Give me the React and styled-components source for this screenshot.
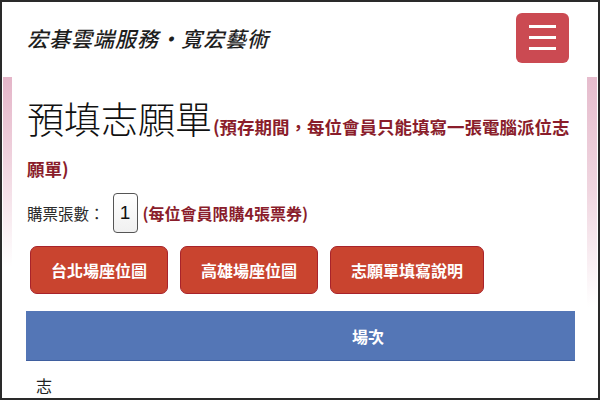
import React from "react";
import styled, { createGlobalStyle } from "styled-components";

const Global = createGlobalStyle`
  html, body { margin: 0; padding: 0; background: #fff; }
  body { font-family: "Noto Sans CJK TC", "Noto Sans", sans-serif; }
`;

const Frame = styled.div`
  width: 600px;
  height: 400px;
  box-sizing: border-box;
  border: 2px solid #2a2a2a;
  overflow: hidden;
  background:
    linear-gradient(to bottom, #e4b5c8 0%, #efd0dc 40%, #fff 100%) 1px 75px / 9px 190px no-repeat,
    linear-gradient(to bottom, #e6bccd 0%, #f0d6e0 50%, #fff 100%) 585px 75px / 10px 230px no-repeat,
    #fff;
`;

const Header = styled.header`
  display: flex;
  justify-content: space-between;
  align-items: center;
  padding: 11px 29px 0 25px;
  height: 49px;
`;

const Brand = styled.div`
  font-size: 21px;
  font-style: italic;
  font-weight: 500;
  color: #1e1e1e;
  letter-spacing: 1px;
`;

const MenuButton = styled.button`
  width: 53px;
  height: 50px;
  box-sizing: border-box;
  border: none;
  border-radius: 6px;
  background: #cb4a52;
  display: flex;
  flex-direction: column;
  justify-content: center;
  align-items: center;
  gap: 8px;
  padding: 0;
`;

const Bar = styled.span`
  display: block;
  width: 27px;
  height: 3px;
  background: #fff;
`;

const Content = styled.main`
  padding: 35px 0 0 25px;
`;

const Title = styled.h1`
  margin: 0;
  font-size: 37px;
  line-height: 42px;
  font-weight: 300;
  color: #111;
  padding-right: 28px;
`;

const Note = styled.span`
  font-size: 17.5px;
  line-height: 1;
  font-weight: 700;
  color: #8a1d2b;
  margin-left: 1px;
`;

const QtyNote = styled(Note)`
  font-size: 16px;
  margin-left: 0;
`;

const QtyRow = styled.div`
  display: flex;
  align-items: center;
  margin-top: 12px;
  font-size: 15.5px;
  color: #2a2a2a;
`;

const QtyBox = styled.div`
  width: 25px;
  height: 40px;
  box-sizing: border-box;
  border: 1px solid #555;
  border-radius: 4px;
  background: linear-gradient(#fff, #f0f0f0);
  display: flex;
  align-items: center;
  justify-content: center;
  font-family: "Liberation Sans", sans-serif;
  font-size: 19px;
  color: #111;
  margin: 0 5px 0 8px;
`;

const Buttons = styled.div`
  display: flex;
  gap: 12px;
  margin-top: 13px;
  padding-left: 3px;
`;

const RedButton = styled.button`
  height: 48px;
  padding: 0 20px;
  border: 1px solid #a8232b;
  border-radius: 7px;
  background: #c9442f;
  color: #fff;
  font-family: "Noto Sans CJK TC", sans-serif;
  font-size: 16px;
  font-weight: 700;
`;

const TableHead = styled.div`
  display: grid;
  grid-template-columns: 135px 1fr;
  width: 549px;
  height: 50px;
  margin: 17px 0 0 -1px;
  background: #5476b6;
  border-bottom: 1px solid #3f5f9f;
  box-sizing: border-box;
  color: #fff;
  font-size: 16px;
  font-weight: 700;
  align-items: center;
`;

const HeadCell = styled.div`
  text-align: center;
`;

const RowText = styled.div`
  margin: 12px 0 0 9px;
  font-size: 16px;
  color: #222;
`;

export default function App() {
  return (
    <>
      <Global />
      <Frame>
        <Header>
          <Brand>宏碁雲端服務・寬宏藝術</Brand>
          <MenuButton aria-label="menu">
            <Bar />
            <Bar />
            <Bar />
          </MenuButton>
        </Header>
        <Content>
          <Title>
            預填志願單<Note>(預存期間，每位會員只能填寫一張電腦派位志願單)</Note>
          </Title>
          <QtyRow>
            購票張數：<QtyBox>1</QtyBox>
            <QtyNote>(每位會員限購4張票券)</QtyNote>
          </QtyRow>
          <Buttons>
            <RedButton>台北場座位圖</RedButton>
            <RedButton>高雄場座位圖</RedButton>
            <RedButton>志願單填寫說明</RedButton>
          </Buttons>
          <TableHead>
            <HeadCell />
            <HeadCell>場次</HeadCell>
          </TableHead>
          <RowText>志</RowText>
        </Content>
      </Frame>
    </>
  );
}
